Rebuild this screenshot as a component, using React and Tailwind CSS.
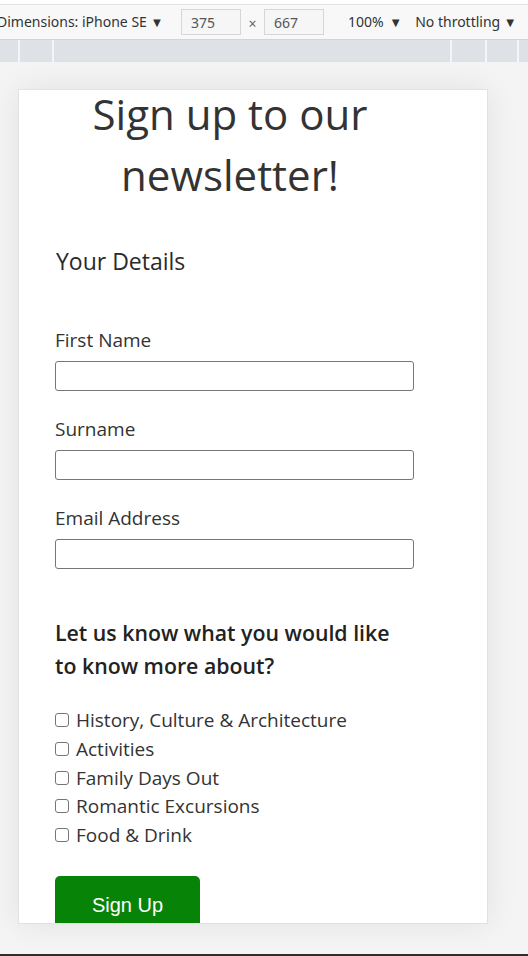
export default function App() {
  const topics = [
    "History, Culture & Architecture",
    "Activities",
    "Family Days Out",
    "Romantic Excursions",
    "Food & Drink",
  ];
  const fields = ["First Name", "Surname", "Email Address"];
  return (
    <div className="w-[528px] h-[956px] overflow-hidden flex flex-col bg-[#f4f4f4]" style={{ fontFamily: '"Open Sans", "Noto Sans", sans-serif' }}>
      {/* devtools device toolbar */}
      <div className="h-[5px] bg-white border-b border-[#e2e2e2] shrink-0" />
      <div className="h-[35px] shrink-0 bg-[#f8f8f8] border-b border-[#d4d4d4] flex items-center text-[14px] text-[#333] whitespace-nowrap" style={{ fontFamily: '"Noto Sans", "Open Sans", sans-serif' }}>
        <span className="ml-[-3px] w-[184px]">Dimensions: iPhone SE <span className="text-[13px]">▼</span></span>
        <div className="w-[60px] h-[26px] border border-[#d6d6d6] bg-[#f6f6f6] pl-[9px] flex items-center text-[#555]">375</div>
        <span className="w-[23px] text-center text-[#666] text-[14px] pt-[3px]">×</span>
        <div className="w-[60px] h-[26px] border border-[#d6d6d6] bg-[#f6f6f6] pl-[9px] flex items-center text-[#555]">667</div>
        <span className="ml-[24px]">100% <span className="text-[13px] ml-[2px]">▼</span></span>
        <span className="ml-[13px]">No throttling <span className="text-[13px]">▼</span></span>
      </div>
      <div className="h-[22px] shrink-0 bg-[#dee1e6] flex">
        <div className="w-[20px] border-r-2 border-[#f4f5f7]" />
        <div className="w-[34px] border-r-2 border-[#f4f5f7]" />
        <div className="w-[398px] border-r-2 border-[#f4f5f7]" />
        <div className="w-[35px] border-r-2 border-[#f4f5f7]" />
        <div className="w-[32px] border-r-2 border-[#f4f5f7]" />
        <div className="flex-1" />
      </div>

      {/* page */}
      <div className="flex-1 relative">
        <div className="ml-[18px] mt-[27px] w-[470px] h-[835px] bg-white border border-[#e2e2e2] overflow-hidden shadow-[0_0_30px_rgba(0,0,0,0.08)]">
          <div className="pl-[36px]">
            <h1 className="w-[350px] mt-[-7px] text-center text-[42px] leading-[61px] font-normal text-[#333]">
              Sign up to our newsletter!
            </h1>
            <h2 className="mt-[41px] ml-[1px] text-[23px] leading-[30px] font-normal text-[#2a2a2a]">Your Details</h2>
            <form className="flex flex-col" onSubmit={(e) => e.preventDefault()}>
              {fields.map((f, i) => (
                <div key={f} className={i === 0 ? "mt-[50px]" : "mt-[24px]"}>
                  <label className="block text-[19px] leading-[28px] text-[#333]">{f}</label>
                  <input className="block mt-[7px] w-[359px] h-[30px] border border-[#767676] rounded-[3px] bg-white" />
                </div>
              ))}
              <h3 className="mt-[47px] w-[350px] text-[21.3px] leading-[33px] font-semibold text-[#222]">
                Let us know what you would like to know more about?
              </h3>
              <div className="mt-[24px]">
                {topics.map((t) => (
                  <div key={t} className="text-[19px] leading-[28.8px] text-[#333] whitespace-nowrap">
                    <span className="inline-block w-[14px] h-[14px] border border-[#767676] rounded-[3px] mr-[7px] align-baseline" />
                    {t}
                  </div>
                ))}
              </div>
              <div className="mt-[26px]">
                <button type="submit" className="w-[145px] pt-[18px] pb-[18px] bg-[#078408] rounded-[5px] text-white text-[20px] leading-[23px]" style={{ fontFamily: '"Liberation Sans", Arial, sans-serif' }}>
                  Sign Up
                </button>
              </div>
            </form>
          </div>
        </div>
      </div>
      <div className="h-[2px] shrink-0 bg-[#2f2f2f]" />
    </div>
  );
}
